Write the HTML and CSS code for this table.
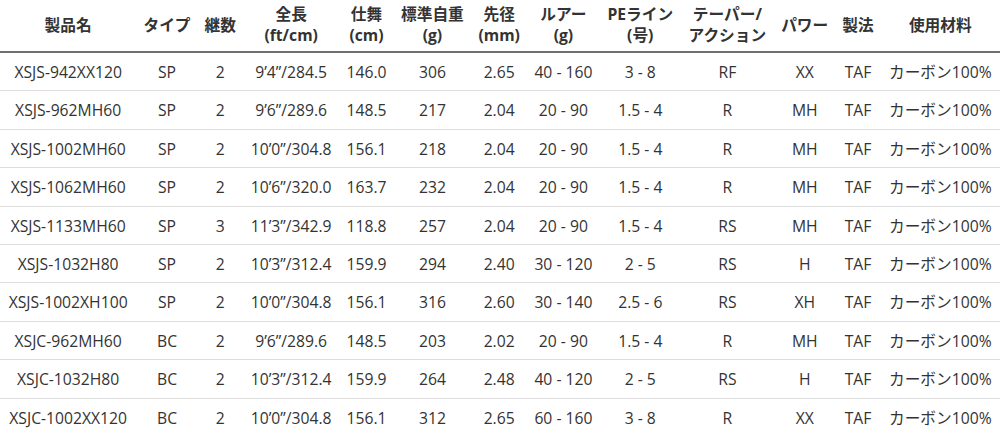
FILE: index.html
```html
<!DOCTYPE html>
<html lang="ja">
<head>
<meta charset="utf-8">
<title>Spec table</title>
<link rel="stylesheet" href="styles.css">
</head>
<body>
<table class="spec">
  <thead>
    <tr>
      <th>製品名</th>
      <th>タイプ</th>
      <th>継数</th>
      <th>全長<br>(ft/cm)</th>
      <th>仕舞<br>(cm)</th>
      <th>標準自重<br>(g)</th>
      <th>先径<br>(mm)</th>
      <th>ルアー<br>(g)</th>
      <th>PEライン<br>(号)</th>
      <th>テーパー/<br>アクション</th>
      <th>パワー</th>
      <th>製法</th>
      <th>使用材料</th>
    </tr>
  </thead>
  <tbody>
    <tr><td>XSJS-942XX120</td><td>SP</td><td>2</td><td>9’4”/284.5</td><td>146.0</td><td>306</td><td>2.65</td><td>40 - 160</td><td>3 - 8</td><td>RF</td><td>XX</td><td>TAF</td><td>カーボン100%</td></tr>
    <tr><td>XSJS-962MH60</td><td>SP</td><td>2</td><td>9’6”/289.6</td><td>148.5</td><td>217</td><td>2.04</td><td>20 - 90</td><td>1.5 - 4</td><td>R</td><td>MH</td><td>TAF</td><td>カーボン100%</td></tr>
    <tr><td>XSJS-1002MH60</td><td>SP</td><td>2</td><td>10’0”/304.8</td><td>156.1</td><td>218</td><td>2.04</td><td>20 - 90</td><td>1.5 - 4</td><td>R</td><td>MH</td><td>TAF</td><td>カーボン100%</td></tr>
    <tr><td>XSJS-1062MH60</td><td>SP</td><td>2</td><td>10’6”/320.0</td><td>163.7</td><td>232</td><td>2.04</td><td>20 - 90</td><td>1.5 - 4</td><td>R</td><td>MH</td><td>TAF</td><td>カーボン100%</td></tr>
    <tr><td>XSJS-1133MH60</td><td>SP</td><td>3</td><td>11’3”/342.9</td><td>118.8</td><td>257</td><td>2.04</td><td>20 - 90</td><td>1.5 - 4</td><td>RS</td><td>MH</td><td>TAF</td><td>カーボン100%</td></tr>
    <tr><td>XSJS-1032H80</td><td>SP</td><td>2</td><td>10’3”/312.4</td><td>159.9</td><td>294</td><td>2.40</td><td>30 - 120</td><td>2 - 5</td><td>RS</td><td>H</td><td>TAF</td><td>カーボン100%</td></tr>
    <tr><td>XSJS-1002XH100</td><td>SP</td><td>2</td><td>10’0”/304.8</td><td>156.1</td><td>316</td><td>2.60</td><td>30 - 140</td><td>2.5 - 6</td><td>RS</td><td>XH</td><td>TAF</td><td>カーボン100%</td></tr>
    <tr><td>XSJC-962MH60</td><td>BC</td><td>2</td><td>9’6”/289.6</td><td>148.5</td><td>203</td><td>2.02</td><td>20 - 90</td><td>1.5 - 4</td><td>R</td><td>MH</td><td>TAF</td><td>カーボン100%</td></tr>
    <tr><td>XSJC-1032H80</td><td>BC</td><td>2</td><td>10’3”/312.4</td><td>159.9</td><td>264</td><td>2.48</td><td>40 - 120</td><td>2 - 5</td><td>RS</td><td>H</td><td>TAF</td><td>カーボン100%</td></tr>
    <tr><td>XSJC-1002XX120</td><td>BC</td><td>2</td><td>10’0”/304.8</td><td>156.1</td><td>312</td><td>2.65</td><td>60 - 160</td><td>3 - 8</td><td>R</td><td>XX</td><td>TAF</td><td>カーボン100%</td></tr>
  </tbody>
</table>
</body>
</html>
```

FILE: styles.css
```css
html, body {
  margin: 0;
  padding: 0;
  background: #ffffff;
}

body {
  font-family: "Open Sans", "Noto Sans CJK JP", sans-serif;
  font-size: 15.7px;
  color: #333333;
}

.spec {
  width: 1000px;
  border-collapse: collapse;
}

.spec th {
  font-weight: bold;
  color: #333333;
  line-height: 21px;
  padding: 4px 6px 5px;
  border-bottom: 2px solid #707070;
  text-align: center;
  vertical-align: middle;
  white-space: nowrap;
}

.spec td {
  line-height: 20.4px;
  padding: 9px 6px 8px;
  border-bottom: 1px solid #dddddd;
  text-align: center;
  white-space: nowrap;
}

.spec tbody tr:last-child td {
  border-bottom: none;
}
```
